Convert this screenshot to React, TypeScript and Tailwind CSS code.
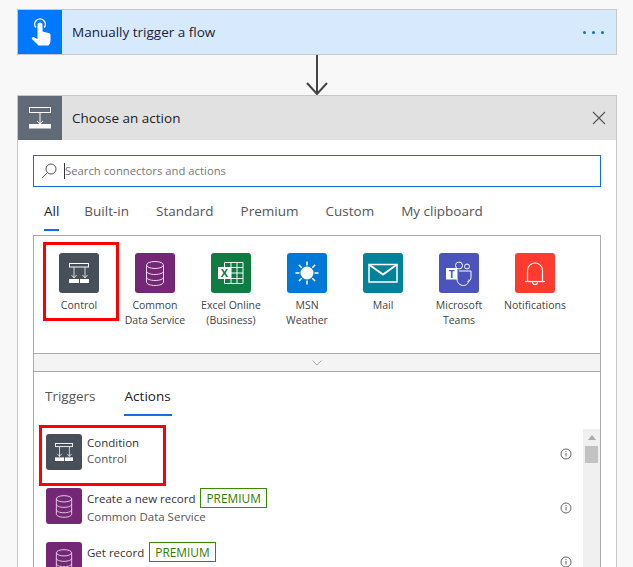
const connectors = [
  { name: "Control", second: "", bg: "bg-[#474f5b]", icon: "control" },
  { name: "Common", second: "Data Service", bg: "bg-[#742774]", icon: "cds" },
  { name: "Excel Online", second: "(Business)", bg: "bg-[#107c41]", icon: "excel" },
  { name: "MSN", second: "Weather", bg: "bg-[#0078d7]", icon: "sun" },
  { name: "Mail", second: "", bg: "bg-[#00829b]", icon: "mail" },
  { name: "Microsoft", second: "Teams", bg: "bg-[#4b53bc]", icon: "teams" },
  { name: "Notifications", second: "", bg: "bg-[#ff3b30]", icon: "bell" },
];

const topTabs = ["Built-in", "Standard", "Premium", "Custom", "My clipboard"];

function ControlIcon({ size }: { size: number }) {
  return (
    <svg width={size} height={size} viewBox="0 0 40 40" fill="none" stroke="#fff">
      <rect x="10.5" y="10.5" width="19" height="3.500" strokeWidth="1" />
      <path d="M15 14v11M26 14v11M12.500 22l2.500 3 2.500-3M23.500 22l2.500 3 2.500-3" strokeWidth="1" stroke="#d8dade" />
      <rect x="10" y="26" width="10" height="4" fill="#fff" stroke="none" />
      <rect x="21" y="26" width="9" height="4" fill="#fff" stroke="none" />
    </svg>
  );
}

function CdsIcon({ size }: { size: number }) {
  return (
    <svg width={size} height={size} viewBox="0 0 40 40" fill="none" stroke="#e9d8e9" strokeWidth="1">
      <ellipse cx="20" cy="12" rx="8.500" ry="3.500" />
      <path d="M11.500 12v17c0 2 3.800 3.500 8.500 3.500s8.500-1.500 8.500-3.500V12" />
      <path d="M11.500 18c0 2 3.800 3.500 8.500 3.500s8.500-1.500 8.500-3.500M11.500 24c0 2 3.800 3.500 8.500 3.500s8.500-1.500 8.500-3.500" />
    </svg>
  );
}

function Icon({ name }: { name: string }) {
  if (name === "control") return <ControlIcon size={40} />;
  if (name === "cds") return <CdsIcon size={40} />;
  if (name === "excel")
    return (
      <svg width="40" height="40" viewBox="0 0 40 40" fill="none">
        <path d="M13.500 9.500h18.500v21H13.500z" stroke="#fff" strokeWidth="1" />
        <path d="M20 14.500h12M20 20h12M20 25.500h12M20 9.500v21M26 9.500v21" stroke="#fff" strokeWidth="1" />
        <rect x="7" y="14" width="13" height="12" fill="#fff" />
        <text x="13.500" y="24" textAnchor="middle" fontSize="11" fontWeight="700" fill="#107c41" stroke="none" fontFamily="'Open Sans', sans-serif">
          X
        </text>
      </svg>
    );
  if (name === "sun")
    return (
      <svg width="40" height="40" viewBox="0 0 40 40" fill="none">
        <circle cx="20" cy="20" r="6.500" fill="#fff" />
        <path
          d="M20 8.500v4M20 27.500v4M8.500 20h4M27.500 20h4M11.900 11.900l2.800 2.800M25.300 25.300l2.800 2.800M11.900 28.100l2.800-2.800M25.300 14.700l2.800-2.800"
          stroke="#fff"
          strokeWidth="1.500"
        />
      </svg>
    );
  if (name === "mail")
    return (
      <svg width="40" height="40" viewBox="0 0 40 40" fill="none" stroke="#fff" strokeWidth="1.500">
        <rect x="6" y="11.500" width="28" height="17.500" />
        <path d="M6 11.500L20 21.500 34 11.500" strokeWidth="2" />
      </svg>
    );
  if (name === "teams")
    return (
      <svg width="40" height="40" viewBox="0 0 40 40" fill="none" stroke="#fff" strokeWidth="1">
        <circle cx="20" cy="12.500" r="3.500" />
        <circle cx="28" cy="13.500" r="2.500" />
        <path d="M20 18h12v6.500c0 2.500-1.800 4-3.500 4M18 26c0 4 3 6.500 6.500 6.500s5.500-3 5.500-6" />
        <rect x="7" y="15" width="11.500" height="11.500" fill="#fff" stroke="none" />
        <text x="12.750" y="24.500" textAnchor="middle" fontSize="10" fontWeight="700" fill="#4b53bc" stroke="none" fontFamily="'Open Sans', sans-serif">
          T
        </text>
      </svg>
    );
  return (
    <svg width="40" height="40" viewBox="0 0 40 40" fill="none" stroke="#fff" strokeWidth="1.200">
      <path d="M12.500 28V17.500a7.500 7.500 0 0 1 15 0V28" />
      <path d="M10 28.500h20" />
      <path d="M17.500 29a2.500 2.500 0 0 0 5 0" />
    </svg>
  );
}

function Info() {
  return (
    <svg width="12" height="12" viewBox="0 0 12 12" fill="none" stroke="#555" strokeWidth="0.900">
      <circle cx="6" cy="6" r="5" />
      <path d="M6 5v3.500M6 3v1" />
    </svg>
  );
}

function Premium() {
  return (
    <span className="h-[20px] px-[5px] border border-[#3a8a00] text-[#2f7d00] text-[11.900px] leading-[18px]">
      PREMIUM
    </span>
  );
}

export default function App() {
  return (
    <div
      className="h-[567px] overflow-hidden bg-[#f8f8f8] pt-[9px] pl-[17px] pr-[16px] text-[#333]"
      style={{ fontFamily: "'Open Sans', sans-serif" }}
    >
      <div className="flex h-[46px] items-center border border-[#c8c8c8] bg-[#d7e9fd]">
        <div className="flex h-[44px] w-[44px] items-center justify-center bg-[#0078ff]">
          <svg width="24" height="30" viewBox="0 0 24 30" fill="#fff">
            <path d="M9.500 8a2.500 2.500 0 0 1 5 0v6.500l6 1.500c1.500.4 2 1 2 2.500v5c0 2-1 4-2 5H10.500L4 22c-.8-1.200.5-2.500 2-1.800l3.500 1.800z" />
            <path d="M7.800 10.500a5.300 5.300 0 1 1 8.400 0" fill="none" stroke="#fff" strokeWidth="1.400" />
          </svg>
        </div>
        <span className="ml-[10px] flex-1 text-[13.500px] text-[#1c1c3a]">Manually trigger a flow</span>
        <div className="mr-[12px] flex gap-[6px]">
          <span className="h-[3px] w-[3px] rounded-full bg-[#0a6fd8]" />
          <span className="h-[3px] w-[3px] rounded-full bg-[#0a6fd8]" />
          <span className="h-[3px] w-[3px] rounded-full bg-[#0a6fd8]" />
        </div>
      </div>

      <div className="flex h-[40px] justify-center">
        <svg width="24" height="40" viewBox="0 0 24 40" fill="none" stroke="#444" strokeWidth="2">
          <path d="M12 0v39M2 28l10 11 10-11" />
        </svg>
      </div>

      <div className="border border-[#c8c8c8] bg-white">
        <div className="flex h-[44px] items-center bg-[#e1e1e1]">
          <div className="flex h-[44px] w-[44px] items-center justify-center bg-[#616b77]">
            <svg width="24" height="24" viewBox="0 0 24 24" fill="none" stroke="#fff">
              <rect x="1.500" y="1.500" width="21" height="5" strokeWidth="1" />
              <path d="M12 7v11M9 15l3 3 3-3" strokeWidth="1" />
              <rect x="1" y="18" width="22" height="4.500" fill="#fff" stroke="none" />
            </svg>
          </div>
          <span className="ml-[10px] flex-1 text-[13.500px] text-[#222]">Choose an action</span>
          <svg className="mr-[10px]" width="14" height="14" viewBox="0 0 14 14" stroke="#555" strokeWidth="1.100">
            <path d="M1 1l12 12M13 1L1 13" />
          </svg>
        </div>

        <div className="px-[15px] pt-[15px]">
          <div className="flex h-[32px] items-center border border-[#0f6fe8] pl-[7px]">
            <svg width="16" height="16" viewBox="0 0 16 16" fill="none" stroke="#555" strokeWidth="1">
              <circle cx="10" cy="6" r="5" />
              <path d="M6.500 9.500L1 15" />
            </svg>
            <span className="ml-[7px] h-[16px] w-px bg-[#333]" />
            <span className="pt-[1px] text-[11.300px] text-[#777]">Search connectors and actions</span>
          </div>

          <div className="flex h-[48px] items-center pl-[11px] text-[13.500px] text-[#555]">
            <span className="relative mr-[25px] flex h-full items-center pt-[1px] font-medium text-[#222]">
              All
              <span className="absolute right-0 bottom-[4px] left-0 h-[2px] bg-[#0f6fe8]" />
            </span>
            {topTabs.map((t) => (
              <span key={t} className="mr-[27px] pt-[1px]">
                {t}
              </span>
            ))}
          </div>

          <div className="relative border border-[#aaa]">
            <div className="flex h-[117px] pl-[7px] pt-[17px]">
              {connectors.map((c) => (
                <div key={c.name} className="flex w-[76px] flex-col items-center">
                  <div className={`h-[40px] w-[40px] rounded-[3px] ${c.bg}`}>
                    <Icon name={c.icon} />
                  </div>
                  <span className="mt-[5px] text-[10.500px] leading-[15px] whitespace-nowrap text-[#444]">{c.name}</span>
                  <span className="text-[10.500px] leading-[15px] whitespace-nowrap text-[#444]">{c.second}</span>
                </div>
              ))}
            </div>
            <div className="absolute top-[6px] left-[9px] h-[79px] w-[76px] border-[3px] border-[#f00]" />

            <div className="flex h-[19px] items-center justify-center border-y border-[#aaa] bg-[#f4f4f4]">
              <svg width="10" height="6" viewBox="0 0 10 6" fill="none" stroke="#aaa">
                <path d="M.5.500L5 5 9.500.500" />
              </svg>
            </div>

            <div className="relative h-[200px]">
              <div className="flex h-[43px] pl-[11px] text-[13.500px]">
                <span className="mr-[28px] pt-[14px] text-[#555]">Triggers</span>
                <span className="h-[44px] border-b-2 border-[#0f6fe8] px-[1px] pt-[14px] font-medium text-[#222]">Actions</span>
              </div>

              <div className="pt-[19px] pl-[12px]">
                <div className="flex h-[54px] text-[11.500px]">
                  <div className="h-[36px] w-[36px] rounded-[3px] bg-[#474f5b]">
                    <ControlIcon size={36} />
                  </div>
                  <div className="ml-[5px] flex flex-col leading-[16px]">
                    <span className="mt-[1px] text-[#333]">Condition</span>
                    <span className="text-[#555]">Control</span>
                  </div>
                </div>
                <div className="flex h-[54px] text-[11.500px]">
                  <div className="h-[36px] w-[36px] rounded-[3px] bg-[#742774]">
                    <CdsIcon size={36} />
                  </div>
                  <div className="ml-[5px] flex flex-col leading-[18px]">
                    <div className="flex items-center gap-[5px]">
                      <span className="pt-[1px] text-[#333]">Create a new record</span>
                      <Premium />
                    </div>
                    <span className="text-[#555]">Common Data Service</span>
                  </div>
                </div>
                <div className="flex h-[54px] text-[11.500px]">
                  <div className="h-[36px] w-[36px] rounded-[3px] bg-[#742774]">
                    <CdsIcon size={36} />
                  </div>
                  <div className="ml-[5px] flex flex-col leading-[18px]">
                    <div className="flex items-center gap-[5px]">
                      <span className="pt-[1px] text-[#333]">Get record</span>
                      <Premium />
                    </div>
                    <span className="text-[#555]">Common Data Service</span>
                  </div>
                </div>
              </div>

              <div className="absolute top-[53px] left-[5px] h-[61px] w-[127px] border-[3px] border-[#f00]" />

              <div className="absolute top-[76px] right-[28px] flex flex-col gap-[42px]">
                <Info />
                <Info />
                <Info />
              </div>

              <div className="absolute top-[57px] right-0 bottom-0 flex w-[17px] flex-col items-center bg-[#f0f0f0]">
                <span className="mt-[6px] h-0 w-0 border-x-[4px] border-b-[5px] border-x-transparent border-b-[#aaa]" />
                <span className="mt-[6px] h-[17px] w-[13px] bg-[#c2c2c2]" />
              </div>
            </div>
          </div>
        </div>
      </div>
    </div>
  );
}
